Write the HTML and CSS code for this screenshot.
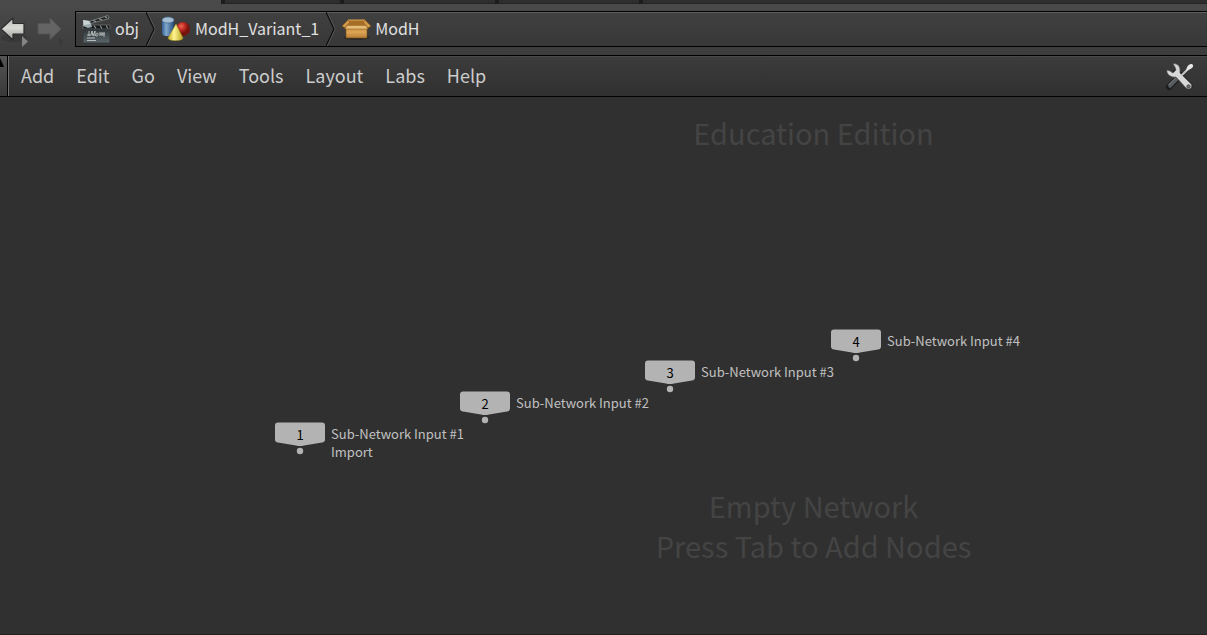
FILE: index.html
```html
<!DOCTYPE html>
<html lang="en">
<head>
<meta charset="utf-8">
<title>Network Editor</title>
<link rel="stylesheet" href="styles.css">
</head>
<body>
<div class="tabs"><span class="tab tab-one"></span><span class="tab tab-two"></span><span class="tab tab-three"></span><span class="tab tab-rest"></span></div>
<header class="pathbar">
  <div class="history">
    <button class="nav" aria-label="Back">
      <svg width="34" height="36" viewBox="0 0 34 36">
        <defs><linearGradient id="back" x1="0" y1="0" x2="0" y2="1"><stop offset="0" stop-color="#b8bab6"/><stop offset=".45" stop-color="#d8d9d4"/><stop offset="1" stop-color="#9c9d99"/></linearGradient></defs>
        <ellipse cx="14" cy="27" rx="13" ry="4" fill="#303030" opacity=".5"/>
        <path d="M1 18 13 7V12.500H24V23H13V29Z" fill="url(#back)" stroke="#2c2c2c" stroke-width="1.200" stroke-linejoin="round"/>
        <path d="M22 25 28 30.500 22 36Z" fill="#858585"/>
      </svg>
    </button>
    <button class="nav" aria-label="Forward">
      <svg width="30" height="36" viewBox="0 0 30 36">
        <path d="M27 18 16 7V12.500H4V23H16V28.500Z" fill="#646464" stroke="#555"/>
        <path d="M25 26 30 31 25 36Z" fill="#3a3a3a"/>
      </svg>
    </button>
  </div>
  <nav class="path" aria-label="Network path">
    <a class="crumb" href="#obj">
      <svg width="29" height="31" viewBox="0 0 29 31">
        <defs><linearGradient id="slate" x1="0" y1="0" x2="0" y2="1"><stop offset="0" stop-color="#303638"/><stop offset="1" stop-color="#5c676b"/></linearGradient></defs>
        <path d="M2 9 26 1.500 27 4.500 7 10Z" fill="#202323" stroke="#858989" stroke-width=".8"/>
        <path d="M11 6.500 14 7.500M17 4.700 20 5.700M23 2.800 25 4" stroke="#9a9e9e" stroke-width="1.200"/>
        <path d="M1 11H28V15H1Z" fill="#171a1a" stroke="#6f7474" stroke-width=".7"/>
        <path d="M12 11.500 14 14.500M18 11.500 20 14.500M24 11.500 26 14.500" stroke="#8e9292" stroke-width="1.200"/>
        <path d="M1 15.500H28V29H1Z" fill="url(#slate)" stroke="#333b3e"/>
        <path d="M1 6 8 7 10 13 6 14 1 12Z" fill="#9caaaf"/>
        <path d="M1 6 7 7 8 10 2 11Z" fill="#cad2d4"/>
        <path d="M5 21h4l1-4 1 5 2-5v5M7 17v5M14 21c0-3 3-2 2 0s-3 1-2 0M18 22v-4M18 20h5M20 18v4M22 18v5M5 24h8M5 26.500h9" fill="none" stroke="#d1d6d5" stroke-width=".8"/>
      </svg>
      <span>obj</span>
    </a>
    <svg class="sep" width="10" height="34" viewBox="0 0 10 34"><path d="M1 0 9 17 1 34" fill="none" stroke="#646464"/><path d="M0 0 8 17 0 34" fill="none" stroke="#101010" stroke-width="1.300"/></svg>
    <a class="crumb" href="#variant">
      <svg width="29" height="26" viewBox="0 0 29 26">
        <defs>
          <linearGradient id="tube"><stop offset="0" stop-color="#315d91"/><stop offset=".35" stop-color="#83a8cc"/><stop offset="1" stop-color="#234979"/></linearGradient>
          <radialGradient id="ball" cx=".38" cy=".3"><stop offset="0" stop-color="#f06856"/><stop offset=".5" stop-color="#c22e24"/><stop offset="1" stop-color="#78120d"/></radialGradient>
          <linearGradient id="cone"><stop offset="0" stop-color="#c5a822"/><stop offset=".4" stop-color="#fff591"/><stop offset="1" stop-color="#bba51e"/></linearGradient>
        </defs>
        <path d="M0 4V18C1 21 12 21 12 18V4Z" fill="url(#tube)"/>
        <ellipse cx="6" cy="4" rx="6" ry="3" fill="#a4bdd2" stroke="#476b90" stroke-width=".7"/>
        <circle cx="21" cy="13" r="7" fill="url(#ball)"/>
        <path d="M14 8 21 22C21 25.500 6 25.500 6 22Z" fill="url(#cone)" stroke="#9c8a20" stroke-width=".5"/>
      </svg>
      <span>ModH_Variant_1</span>
    </a>
    <svg class="sep" width="10" height="34" viewBox="0 0 10 34"><path d="M1 0 9 17 1 34" fill="none" stroke="#646464"/><path d="M0 0 8 17 0 34" fill="none" stroke="#101010" stroke-width="1.300"/></svg>
    <a class="crumb" href="#modh">
      <svg width="29" height="24" viewBox="0 0 29 24">
        <defs><linearGradient id="carton" x1="0" y1="0" x2="0" y2="1"><stop offset="0" stop-color="#b87b33"/><stop offset=".5" stop-color="#dda755"/><stop offset="1" stop-color="#b87c38"/></linearGradient></defs>
        <ellipse cx="14.500" cy="20.500" rx="13" ry="2.500" fill="#292929"/>
        <path d="M4 9H25V21H4Z" fill="url(#carton)" stroke="#754910" stroke-width=".6"/>
        <path d="M6 3H23L25 9H4Z" fill="#a96e26" stroke="#d9a75c"/>
        <path d="M6 3 0 9 3 11 8 5ZM23 3 29 9 26 11 21 5Z" fill="#cf9849" stroke="#865312" stroke-width=".6"/>
        <path d="M5 8.500H24L26 12H3Z" fill="#e6bd78" stroke="#966522" stroke-width=".6"/>
      </svg>
      <span>ModH</span>
    </a>
  </nav>
</header>
<div class="menubar">
  <button class="gutter" aria-label="Collapse"><svg width="7" height="10" viewBox="0 0 7 10"><path d="M0 0 4 9H0Z" fill="#000"/></svg></button>
  <nav class="menus">
    <button>Add</button><button>Edit</button><button>Go</button><button>View</button><button>Tools</button><button>Layout</button><button>Labs</button><button>Help</button>
  </nav>
  <button class="wrench" aria-label="Network tools">
    <svg width="30" height="30" viewBox="0 0 30 30">
      <path d="M11 11 24 24" stroke="#222" stroke-width="7" stroke-linecap="round"/>
      <path d="M16 13 4 25" stroke="#1c1c1c" stroke-width="6" stroke-linecap="round"/>
      <path d="M5 24 14 15" stroke="#555b60" stroke-width="3.500" stroke-linecap="round"/>
      <path d="M3.500 23 12 14.500" stroke="#8b9196"/>
      <path d="M8 2C12 1 15 4 15 8L15 11 26 22C28 25 25 29 21 26L11 15C6 16 1 12 2 8L5 9 8 11 11 8 10 5Z" fill="#d8d8d8" stroke="#555" stroke-width=".7"/>
      <circle cx="23.500" cy="24.500" r="1.700" fill="#777" stroke="#333" stroke-width=".8"/>
      <path d="M16 14 22 8" stroke="#c8c8c8" stroke-width="2"/>
      <path d="M21 8C22 4 24 2 26 2S29 4 27 6L22 9Z" fill="#e6e6e6"/>
    </svg>
  </button>
</div>
<main class="canvas">
  <div class="watermark"><p>Education Edition</p><p>Empty Network<br>Press Tab to Add Nodes</p></div>
  <div class="node node-one"><div class="shape"><svg width="52" height="33" viewBox="0 0 52 33"><path d="M4 .5H48Q51 .5 51 3.500V17.500Q51 20 48 20.500L30 23.500Q26 24.500 22 23.500L4 20.500Q1 20 1 17.500V3.500Q1 .5 4 .5Z" fill="#b3b3b3"/><circle cx="26" cy="29" r="3.200" fill="#b3b3b3"/></svg><span>1</span></div><div class="label">Sub-Network Input #1<br>Import</div></div>
  <div class="node node-two"><div class="shape"><svg width="52" height="33" viewBox="0 0 52 33"><path d="M4 .5H48Q51 .5 51 3.500V17.500Q51 20 48 20.500L30 23.500Q26 24.500 22 23.500L4 20.500Q1 20 1 17.500V3.500Q1 .5 4 .5Z" fill="#b3b3b3"/><circle cx="26" cy="29" r="3.200" fill="#b3b3b3"/></svg><span>2</span></div><div class="label">Sub-Network Input #2</div></div>
  <div class="node node-three"><div class="shape"><svg width="52" height="33" viewBox="0 0 52 33"><path d="M4 .5H48Q51 .5 51 3.500V17.500Q51 20 48 20.500L30 23.500Q26 24.500 22 23.500L4 20.500Q1 20 1 17.500V3.500Q1 .5 4 .5Z" fill="#b3b3b3"/><circle cx="26" cy="29" r="3.200" fill="#b3b3b3"/></svg><span>3</span></div><div class="label">Sub-Network Input #3</div></div>
  <div class="node node-four"><div class="shape"><svg width="52" height="33" viewBox="0 0 52 33"><path d="M4 .5H48Q51 .5 51 3.500V17.500Q51 20 48 20.500L30 23.500Q26 24.500 22 23.500L4 20.500Q1 20 1 17.500V3.500Q1 .5 4 .5Z" fill="#b3b3b3"/><circle cx="26" cy="29" r="3.200" fill="#b3b3b3"/></svg><span>4</span></div><div class="label">Sub-Network Input #4</div></div>
</main>
</body>
</html>
```
FILE: styles.css
```css
* { box-sizing: border-box; }
body {
  margin: 0;
  min-height: 100vh;
  display: flex;
  flex-direction: column;
  background: #303030;
  color: #ccc;
  font-family: "Noto Sans CJK SC", "Noto Sans", sans-serif;
}
svg { display: block; flex: none; }
button { margin: 0; padding: 0; border: 0; background: none; color: inherit; font: inherit; }
p { margin: 0; }
.tabs { display: flex; height: 4px; padding-left: 221px; background: #4a4a4a; }
.tab { border-left: 4px solid #1c1c1c; border-bottom: 1px solid #242424; background: #2e2e2e; }
.tab-one { width: 119px; }
.tab-two { width: 155px; }
.tab-three { width: 144px; }
.tab-rest { flex: 1; }
.pathbar {
  display: flex;
  height: 51px;
  padding: 7px 0 8px;
  background: linear-gradient(#4a4a4a, #3c3c3c);
}
.history { display: flex; width: 75px; flex: none; align-items: flex-start; }
.path {
  display: flex;
  flex: 1;
  border: 1px solid #000;
  border-right: 0;
  background: linear-gradient(#404040, #383838);
  box-shadow: inset 0 1px #606060;
}
.crumb {
  display: flex;
  align-items: center;
  gap: 4px;
  padding: 0 7px 0 6px;
  color: #e0e0e0;
  font-size: 16px;
  line-height: 32px;
  text-decoration: none;
}
.crumb span { padding-bottom: 2px; }
.menubar {
  display: flex;
  height: 42px;
  border-top: 1px solid #000;
  border-bottom: 1px solid #000;
  background: linear-gradient(#3c3c3c, #303030);
  box-shadow: inset 0 1px #484848;
}
.gutter { display: flex; width: 9px; padding-top: 2px; border-right: 1px solid #707070; box-shadow: inset -1px 0 #000; background: linear-gradient(#555, #383838); }
.menus { display: flex; flex: 1; gap: 22px; padding: 0 0 2px 12px; font-size: 18px; }
.wrench { padding: 2px 12px 0; }
.canvas { position: relative; flex: 1; border-bottom: 1px solid #272023; }
.watermark {
  position: absolute;
  inset: 0;
  display: flex;
  flex-direction: column;
  justify-content: space-between;
  padding: 15px 0 69px 420px;
  color: #444;
  font-size: 29px;
  line-height: 40px;
  text-align: center;
}
.node { position: absolute; display: flex; gap: 5px; color: #c0c0c0; font-size: 13px; line-height: 18px; }
.shape { position: relative; }
.shape span { position: absolute; inset: 4px 0 auto; color: #000; text-align: center; }
.label { padding-top: 3px; white-space: nowrap; }
.node-one { left: 274px; top: 325px; }
.node-two { left: 459px; top: 294px; }
.node-three { left: 644px; top: 263px; }
.node-four { left: 830px; top: 232px; }
```
